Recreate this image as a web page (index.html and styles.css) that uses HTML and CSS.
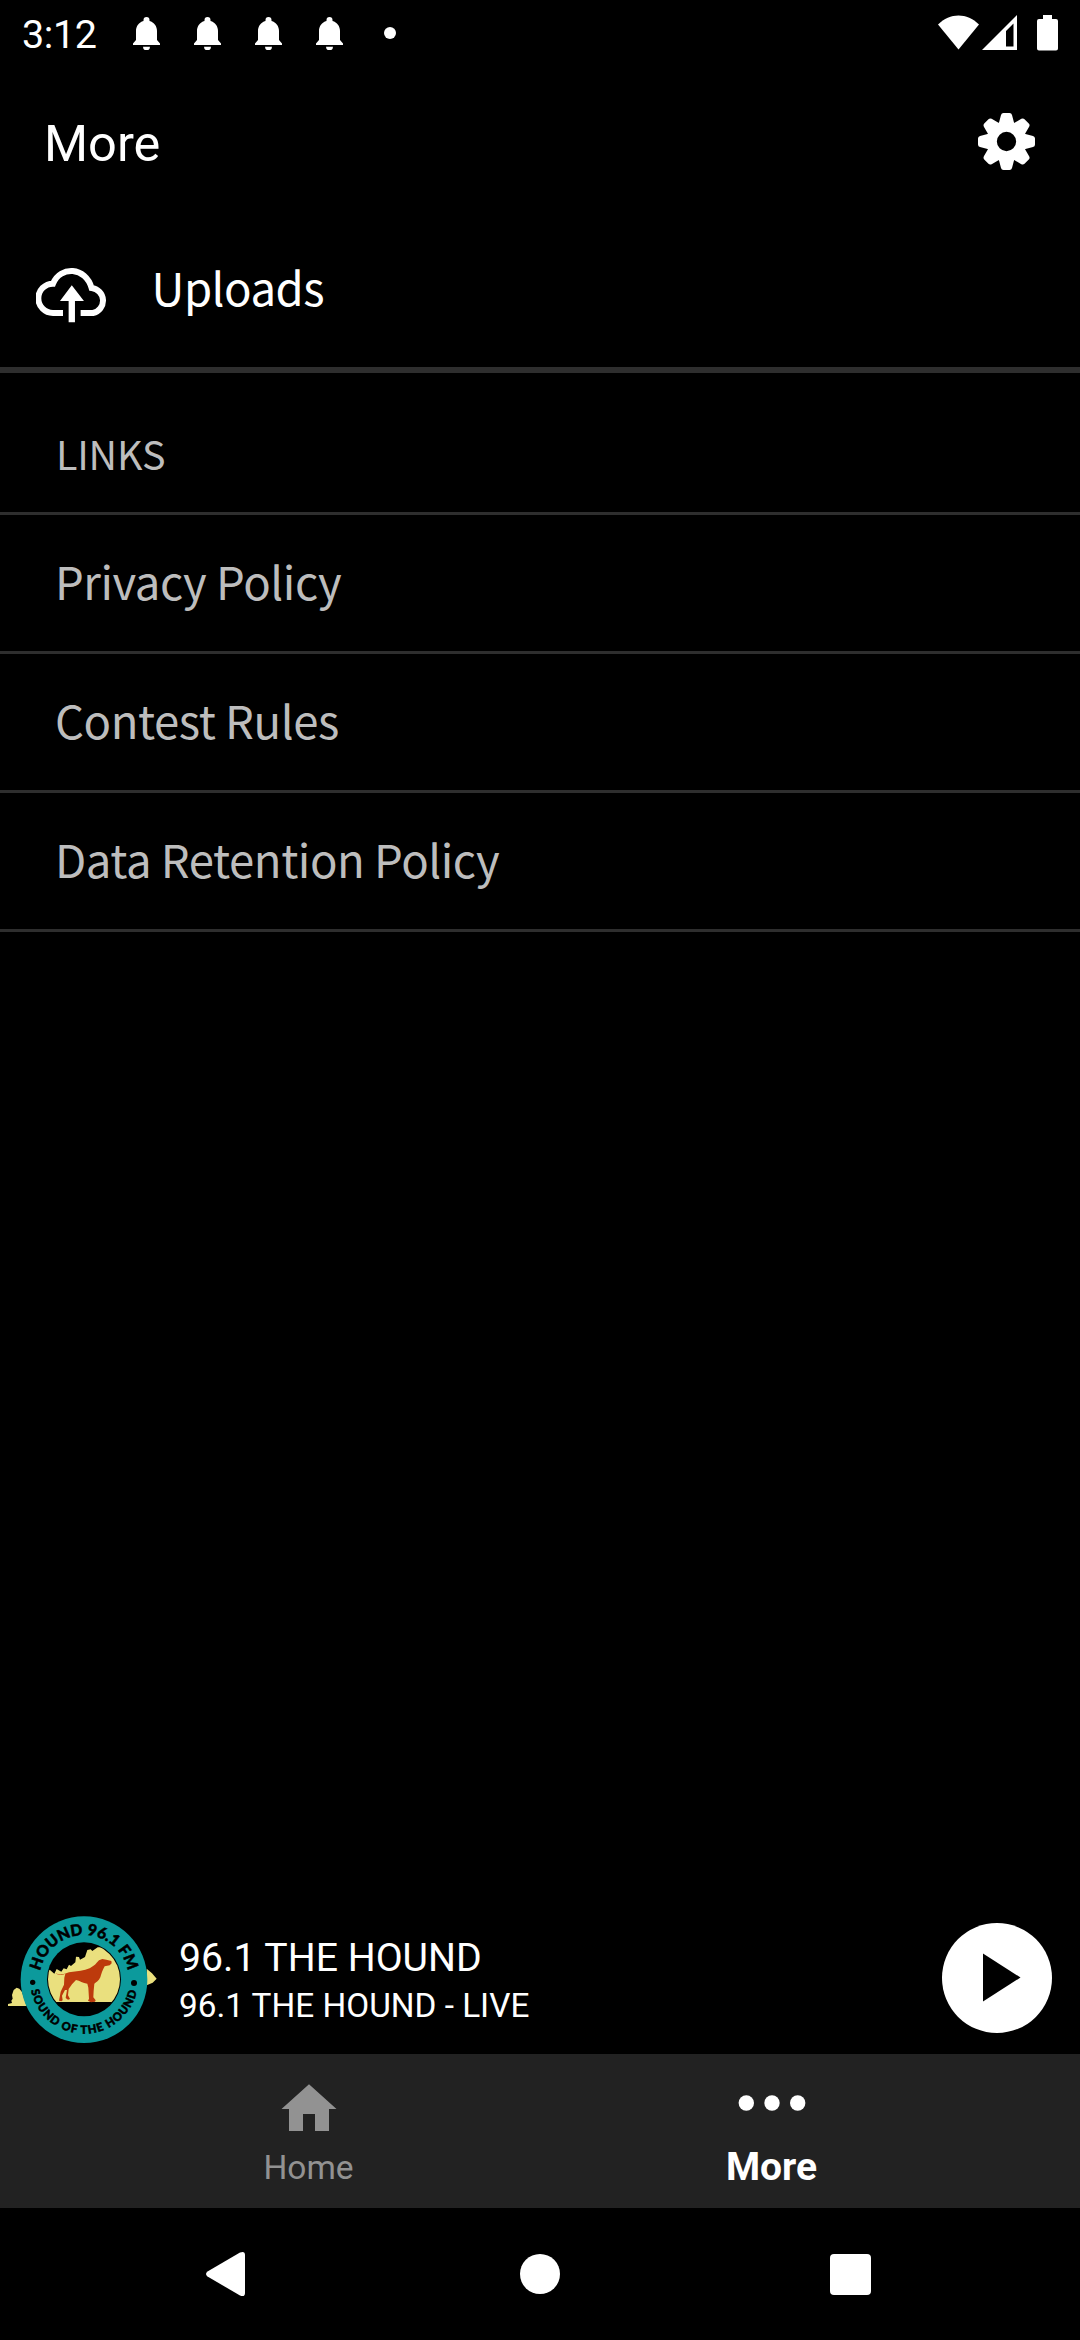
FILE: index.html
```html
<!DOCTYPE html>
<html lang="en">
<head>
<meta charset="utf-8">
<title>More</title>
<link rel="stylesheet" href="styles.css">
</head>
<body>
<svg class="defs" width="0" height="0" aria-hidden="true">
  <symbol id="bell" viewBox="0 0 27 33">
    <path d="M13.5 0a3 3 0 0 1 3 3v.9c4.600 1.300 7.500 5.200 7.500 10.100V23l3 3.500V28H0v-1.500L3 23v-9c0-4.900 2.900-8.800 7.500-10.100V3a3 3 0 0 1 3-3zM10 29.800h7a3.500 3.500 0 0 1-7 0z"/>
  </symbol>
</svg>
<div class="screen">
  <div class="status">
    <span class="clock">3:12</span>
    <div class="notices">
      <svg class="bell"><use href="#bell"/></svg>
      <svg class="bell"><use href="#bell"/></svg>
      <svg class="bell"><use href="#bell"/></svg>
      <svg class="bell"><use href="#bell"/></svg>
      <i class="dot"></i>
    </div>
    <svg class="system" viewBox="0 0 120 36">
      <path d="M0 9.500C12-2.500 29-2.500 41 9.500L20.500 34.500z"/>
      <path fill-rule="evenodd" d="M44 35L79 0v35zM68 16v15.500h7.500V8.500z"/>
      <path d="M105 0h9v4h4a2 2 0 0 1 2 2v27.500a2 2 0 0 1-2 2h-17a2 2 0 0 1-2-2V6a2 2 0 0 1 2-2h4z"/>
    </svg>
  </div>
  <header class="header">
    <h1 class="title">More</h1>
    <svg class="gear" viewBox="-28.500 -28.500 57 57">
      <defs><path id="tooth" d="M-8-17L-5.500-26.500Q-5-28.500-3-28.500H3Q5-28.500 5.500-26.500L8-17z"/></defs>
      <use href="#tooth"/><use href="#tooth" transform="rotate(45)"/><use href="#tooth" transform="rotate(90)"/><use href="#tooth" transform="rotate(135)"/><use href="#tooth" transform="rotate(180)"/><use href="#tooth" transform="rotate(225)"/><use href="#tooth" transform="rotate(270)"/><use href="#tooth" transform="rotate(315)"/>
      <circle class="gear-ring" r="14.900"/>
    </svg>
  </header>
  <a class="uploads">
    <svg class="cloud" viewBox="107 140 218 168">
      <path class="cloud-line" d="M188 278H158A41 41 0 0 1 158 190C180 136 256 138 274 203A38 38 0 0 1 278 278H241"/>
      <path d="M214.500 195L251 242H224V306H205V242H179z"/>
    </svg>
    <span>Uploads</span>
  </a>
  <h2 class="group">LINKS</h2>
  <nav class="links">
    <a class="link">Privacy Policy</a>
    <a class="link">Contest Rules</a>
    <a class="link">Data Retention Policy</a>
  </nav>
  <section class="player">
    <svg class="logo" viewBox="0 0 540 462">
      <defs>
        <path id="arc-top" d="M118 239A134 134 0 0 1 386 239"/>
        <path id="arc-low" d="M90 239A162 162 0 0 0 414 239"/>
        <clipPath id="disc"><circle cx="252" cy="238" r="108"/></clipPath>
      </defs>
      <path class="land" d="M24 318V312L36 309L34 302L38 296L36 285L41 270L50 263L58 266L66 276L80 318zM440 206L456 220L470 236L458 248L440 256z"/>
      <circle class="ring" cx="252" cy="239" r="190"/>
      <circle class="hole" cx="252" cy="238" r="111"/>
      <g clip-path="url(#disc)">
        <path class="land" d="M130 208L150 210L163 221L170 207L184 215L191 205L200 208L207 194L213 198L226 187L228 170L237 171L240 179L255 171L262 150L272 148L277 153L293 142L320 142L370 190V306H130z"/>
      </g>
      <path class="dog" d="M167 218C178 228 193 222 207 217L242 212C261 209 279 202 290 188L297 181L307 177L319 179L334 183L335 190L329 196L314 199C307 211 304 222 301 232C297 242 288 247 283 251L281 272L280 292L287 301L285 305L273 307L264 302L267 296L265 263L262 251C248 250 240 242 228 240L216 253L206 267L204 286L210 297L204 299L197 294L201 270L195 270L186 287L188 301L184 304L177 302L182 275L192 254L193 233L196 221C186 226 174 228 167 218z"/>
      <circle cx="98" cy="247" r="8"/><circle cx="402" cy="249" r="9"/>
      <text class="logo-top"><textPath href="#arc-top" startOffset="50%">HOUND 96.1 FM</textPath></text>
      <text class="logo-low"><textPath href="#arc-low" startOffset="50%">SOUND OF THE HOUND</textPath></text>
    </svg>
    <div class="track">
      <div class="station">96.1 THE HOUND</div>
      <div class="show">96.1 THE HOUND - LIVE</div>
    </div>
    <svg class="play" viewBox="0 0 110 110"><circle cx="55" cy="55" r="55"/><path class="play-mark" d="M41 30.500L78.500 54.500L41 78.500z"/></svg>
  </section>
  <nav class="tabs">
    <a class="tab">
      <svg class="tab-icon" viewBox="0 0 56 48"><path d="M28 .3L55.500 25H48V47H34V30H22V47H8V25H.5z"/></svg>
      <span>Home</span>
    </a>
    <a class="tab active">
      <svg class="tab-icon wide" viewBox="0 0 68 48"><circle cx="8.300" cy="19" r="7.700"/><circle cx="34" cy="19" r="7.700"/><circle cx="59.700" cy="19" r="7.700"/></svg>
      <span>More</span>
    </a>
  </nav>
  <div class="system-nav">
    <svg class="back" viewBox="0 0 40 46"><path d="M1.500 20.500L34 1.500Q39 -.5 39 4V42Q39 46.500 34 44.500L1.500 25.500Q-1.500 23 1.500 20.500z"/></svg>
    <i class="home-key"></i>
    <i class="recent-key"></i>
  </div>
</div>
</body>
</html>
```
FILE: styles.css
```css
* { box-sizing: border-box; }
body { margin: 0; background: #000; color: #fff; font-family: Roboto, sans-serif; }
svg { display: block; fill: #fff; flex: none; }
.defs { position: absolute; }
.screen { width: 1080px; height: 2340px; display: flex; flex-direction: column; overflow: hidden; }

.status { height: 66px; display: flex; align-items: center; padding: 0 22px; }
.clock { font-size: 39.500px; line-height: 48px; width: 111px; padding-top: 3px; letter-spacing: -.4px; }
.notices { display: flex; align-items: center; gap: 34px; }
.bell { width: 27px; height: 33px; }
.dot { width: 12px; height: 12px; border-radius: 50%; background: #fff; margin-left: 7px; }
.system { width: 120px; height: 36px; margin-left: auto; }

.header { height: 150px; display: flex; align-items: center; justify-content: space-between; padding: 0 45px 0 44px; }
.title { margin: 0; font-size: 50.500px; line-height: 60px; font-weight: 400; padding-top: 6px; }
.gear { width: 57px; height: 57px; }
.gear-ring { fill: none; stroke: #fff; stroke-width: 10.5; }

.uploads, .group, .links { font-family: "Noto Sans CJK JP", "Noto Sans CJK SC", sans-serif; font-weight: 400; }
.uploads { height: 157px; display: flex; align-items: center; gap: 43px; padding: 0 36px; border-bottom: 6px solid #2e2e2e; font-size: 45.500px; line-height: 66px; letter-spacing: -.5px; }
.uploads span { margin-top: -12px; }
.cloud { width: 72.600px; height: 56px; margin-top: 6px; }
.cloud-line { fill: none; stroke: #fff; stroke-width: 18; }
.group { margin: 0; height: 142px; padding: 50px 56px 0; border-bottom: 3px solid #2e2e2e; color: #bdbdbd; font-size: 39.500px; line-height: 60px; letter-spacing: -.2px; }
.links { flex: 1; color: #bdbdbd; font-size: 45.500px; line-height: 66px; letter-spacing: -.45px; }
.link { display: flex; align-items: center; height: 139px; padding: 0 55px 6px; border-bottom: 3px solid #2e2e2e; }

.player { height: 154px; display: flex; align-items: center; padding-right: 28px; }
.logo { width: 180px; height: 154px; }
.land { fill: #eae07e; }
.ring { fill: #0c9a9c; }
.hole, .logo circle:not(.ring), .logo text { fill: #000; }
.dog { fill: #bd3a0c; }
.logo-top, .logo-low { font-family: Lato, sans-serif; font-weight: 900; text-anchor: middle; stroke: #000; stroke-width: 1.5; }
.logo-top { font-size: 47px; }
.logo-low { font-size: 34px; letter-spacing: 3px; }
.track { flex: 1; padding-top: 8px; margin-left: -1px; }
.station { font-size: 39.200px; line-height: 50px; }
.show { font-size: 33.350px; line-height: 46px; }
.play { width: 110px; height: 110px; margin-top: 2px; }
.logo .ring { fill: #0c9a9c; }
.play-mark { fill: #000; }

.tabs { height: 154px; display: flex; justify-content: center; background: #222; }
.tab { width: 463px; display: flex; flex-direction: column; align-items: center; padding-top: 30px; color: #929292; font-size: 33.500px; line-height: 44px; }
.tab span { margin-top: 14px; }
.tab svg { fill: #929292; }
.tab-icon { width: 56px; height: 48px; }
.wide { width: 68px; }
.active { color: #fff; font-size: 39px; font-weight: 700; }
.tab.active span { margin-top: 13px; }
.tab.active svg { fill: #fff; }

.system-nav { height: 132px; display: flex; align-items: center; justify-content: space-between; padding: 0 209px 0 206px; }
.back { width: 40px; height: 46px; }
.home-key { width: 40px; height: 40px; border-radius: 50%; background: #fff; margin-left: 4px; }
.recent-key { width: 41px; height: 41px; border-radius: 4px; background: #fff; }
```
